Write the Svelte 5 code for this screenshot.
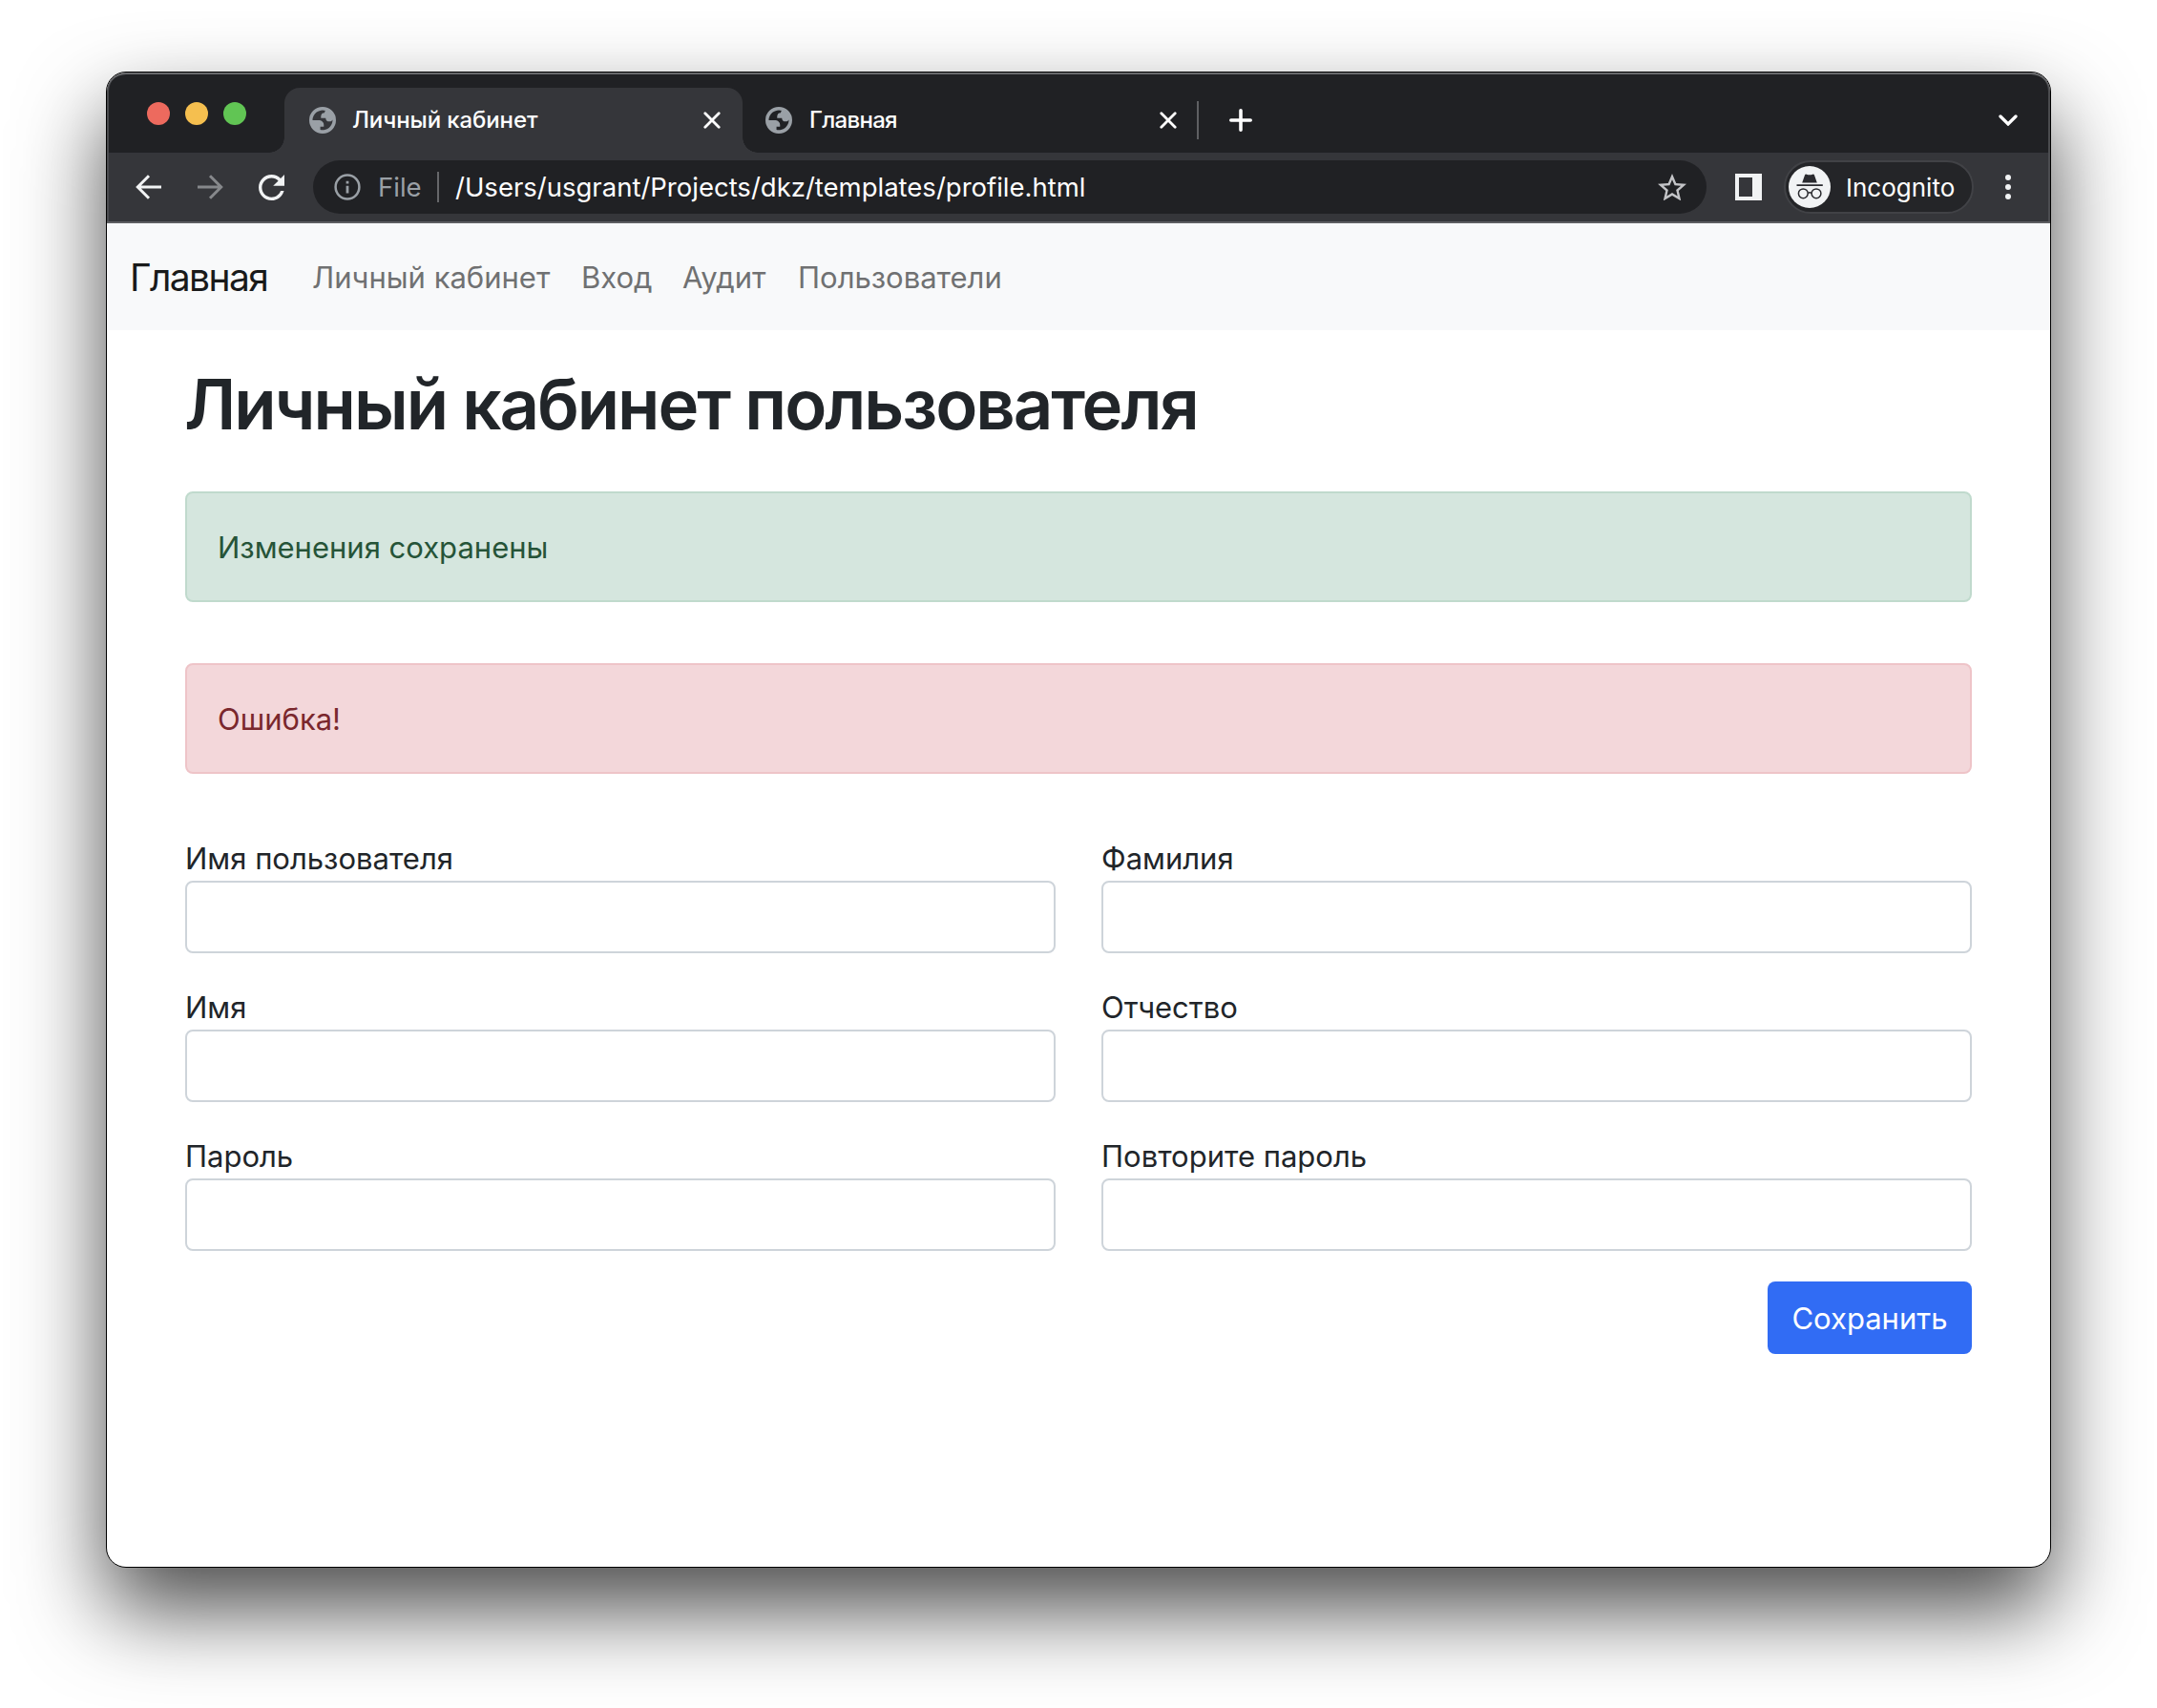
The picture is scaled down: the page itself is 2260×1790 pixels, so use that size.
<script lang="ts">
  const tabs = [
    { title: 'Личный кабинет', active: true },
    { title: 'Главная', active: false }
  ];
  const links = ['Личный кабинет', 'Вход', 'Аудит', 'Пользователи'];
  const fields = [
    { id: 'username', label: 'Имя пользователя', type: 'text' },
    { id: 'surname', label: 'Фамилия', type: 'text' },
    { id: 'name', label: 'Имя', type: 'text' },
    { id: 'patronymic', label: 'Отчество', type: 'text' },
    { id: 'password', label: 'Пароль', type: 'password' },
    { id: 'repeat', label: 'Повторите пароль', type: 'password' }
  ];
</script>

<div class="desktop">
  <div class="window">
    <div class="tabstrip">
      <div class="lights"><i class="red"></i><i class="yellow"></i><i class="green"></i></div>
      {#each tabs as tab}
        <div class="tab" class:active={tab.active}>
          <svg class="globe" viewBox="0 0 16 16" width="28" height="28">
            <path fill="#9aa0a6" fill-rule="evenodd" d="M8 0a8 8 0 1 0 0 16A8 8 0 0 0 8 0zM2 8.011h3.300c2.556.016 3.692 1.297 3.407 3.843H6.616v1.900a6 6 0 0 0 7.373-6.100C13.600 8.300 12.950 8.750 12.100 8.750 10.648 8.750 9.846 8.063 9.846 6.688H7.035C6.830 4.642 7.547 3.619 9.190 3.619c0-.731.245-1.198.608-1.350A6 6 0 0 0 2 8.011z" />
          </svg>
          <span class="tab-title">{tab.title}</span>
          <svg class="close" viewBox="0 0 18 18" width="18" height="18">
            <path d="M1.800 1.800 16.200 16.200M16.200 1.800 1.800 16.200" />
          </svg>
        </div>
      {/each}
      <span class="tab-divider"></span>
      <svg class="plus" viewBox="0 0 24 24" width="24" height="24"><path d="M12 1.800v20.400M1.800 12h20.400" /></svg>
      <svg class="chevron" viewBox="0 0 20 12" width="20" height="12"><path d="M2 2l8 8 8-8" /></svg>
    </div>

    <div class="toolbar">
      <svg class="arrow" viewBox="0 0 28 28" width="28" height="28"><path d="M27 14H2.500M14 2.300 2.300 14 14 25.700" /></svg>
      <svg class="arrow dim" viewBox="0 0 28 28" width="28" height="28"><path d="M1 14h24.500M14 2.300 25.700 14 14 25.700" /></svg>
      <svg class="reload" viewBox="4 4 16 16" width="27" height="27">
        <path fill="#f1f3f4" d="M17.650 6.350C16.200 4.900 14.210 4 12 4c-4.420 0-7.990 3.580-7.990 8s3.570 8 7.990 8c3.730 0 6.840-2.550 7.730-6h-2.080c-.820 2.330-3.040 4-5.650 4-3.310 0-6-2.690-6-6s2.690-6 6-6c1.660 0 3.140.690 4.220 1.780L13 11h7V4l-2.350 2.350z" />
      </svg>
      <div class="omnibox">
        <svg viewBox="0 0 28 28" width="28" height="28">
          <circle cx="14" cy="14" r="12.400" fill="none" stroke="#9aa0a6" stroke-width="2.500" />
          <path d="M14 12.800v7.600M14 7.800v2.800" stroke="#9aa0a6" stroke-width="2.800" />
        </svg>
        <span class="scheme">File</span>
        <span class="bar"></span>
        <span class="url">/Users/usgrant/Projects/dkz/templates/profile.html</span>
        <svg class="star" viewBox="2 2 20 19" width="30" height="28.500">
          <path fill="#c3c4c7" d="M22 9.240l-7.190-.620L12 2 9.190 8.630 2 9.240l5.460 4.730L5.820 21 12 17.270 18.180 21l-1.630-7.030L22 9.240zM12 15.400l-3.760 2.270 1-4.280-3.320-2.880 4.380-.380L12 6.100l1.710 4.040 4.380.380-3.320 2.880 1 4.280L12 15.400z" />
        </svg>
      </div>
      <svg class="panel" viewBox="0 0 28 28" width="28" height="28"><path fill="#f1f3f4" fill-rule="evenodd" d="M0 0h28v28H0zM4 4v20h14V4z" /></svg>
      <div class="incognito">
        <svg viewBox="0 0 44 44" width="44" height="44">
          <circle cx="22" cy="22" r="22" fill="#f1f3f4" />
          <path fill="#2a2b2f" d="M14.200 17.500 17 9.500q.5-1.200 1.800-.8 3.200 1.200 6.400 0 1.300-.4 1.800.8l2.800 8zM8.500 19.200h27.300v1.700H8.500z" />
          <g fill="none" stroke="#2a2b2f" stroke-width="1.500">
            <circle cx="15.300" cy="28.800" r="4.900" /><circle cx="29" cy="28.800" r="4.900" />
            <path d="M20.200 28.500q2-1.400 3.900 0" />
          </g>
        </svg>
        <span>Incognito</span>
      </div>
      <svg class="dots" viewBox="0 0 6 26" width="6" height="26"><circle cx="3" cy="3" r="3" /><circle cx="3" cy="13" r="3" /><circle cx="3" cy="23" r="3" /></svg>
    </div>

    <nav>
      <a class="brand" href="#home">Главная</a>
      {#each links as link, i}
        <a class="link l{i}" href="#nav">{link}</a>
      {/each}
    </nav>

    <main>
      <h1>Личный кабинет пользователя</h1>
      <div class="alert success">Изменения сохранены</div>
      <div class="alert danger">Ошибка!</div>
      <form>
        {#each fields as f}
          <div class="field">
            <label for={f.id}>{f.label}</label>
            <input id={f.id} type={f.type} />
          </div>
        {/each}
        <button type="button">Сохранить</button>
      </form>
    </main>
  </div>
</div>

<style>
  :global(body) { background: #fff; overflow: hidden; }
  * { box-sizing: border-box; }
  .desktop {
    width: 2260px;
    height: 1790px;
    padding: 75px 111px;
    overflow: hidden;
    font-family: Inter, 'Liberation Sans', sans-serif;
  }
  .window {
    width: 2038px;
    height: 1568px;
    border: 1px solid #000;
    border-radius: 21px;
    overflow: hidden;
    background: #fff;
    box-shadow: 0 44px 90px rgba(0, 0, 0, 0.7);
  }
  svg { display: block; flex: none; }

  .tabstrip {
    display: flex;
    align-items: center;
    height: 84px;
    padding: 16px 34px 0 42px;
    background: #202124;
    border-radius: 20px 20px 0 0;
    box-shadow: inset 0 2px 0 #68696c, inset 2px 0 0 #4a4b4e, inset -2px 0 0 #4a4b4e;
  }
  .lights { display: flex; gap: 16px; width: 144px; margin-top: -14px; }
  .lights i { width: 24px; height: 24px; border-radius: 50%; }
  .red { background: #ed6a5e; }
  .yellow { background: #f5bf4f; }
  .green { background: #61c554; }
  .tab {
    position: relative;
    display: flex;
    align-items: center;
    width: 480px;
    height: 68px;
    padding: 0 23px 0 26px;
    border-radius: 16px 16px 0 0;
    color: #fff;
  }
  .tab + .tab { width: 476px; padding: 0 21px 0 24px; }
  .tab.active { background: #35363a; }
  /* Outward curved feet of the selected tab */
  .tab.active::before,
  .tab.active::after {
    content: '';
    position: absolute;
    bottom: 0;
    width: 16px;
    height: 16px;
  }
  .tab.active::before { left: -16px; background: radial-gradient(circle at 0 0, transparent 15.500px, #35363a 16px); }
  .tab.active::after { right: -16px; background: radial-gradient(circle at 100% 0, transparent 15.500px, #35363a 16px); }
  .tab-title { flex: 1; margin-left: 18px; padding-bottom: 2px; font-size: 24px; font-weight: 500; letter-spacing: -0.7px; }
  .tab.active .tab-title { margin-left: 17px; letter-spacing: -0.1px; }
  .close path { stroke: #fff; stroke-width: 2.800; stroke-linecap: round; }
  .tab-divider { width: 2px; height: 40px; background: #5f6063; }
  .plus { margin-left: 32px; }
  .plus path { stroke: #fff; stroke-width: 3.600; stroke-linecap: round; }
  .chevron { margin-left: auto; }
  .chevron path { fill: none; stroke: #fff; stroke-width: 3.300; stroke-linecap: round; }

  .toolbar {
    display: flex;
    align-items: center;
    height: 74px;
    padding: 0 41px 2px 30px;
    background: #35363a;
    box-shadow: inset 0 -2px 0 #5d5e61, inset 2px 0 0 #4b4c50, inset -2px 0 0 #4b4c50;
  }
  .arrow path { fill: none; stroke: #f1f3f4; stroke-width: 3; }
  .arrow.dim { margin-left: 36px; }
  .arrow.dim path { stroke: #86888b; }
  .reload { margin-left: 37px; }
  .omnibox {
    display: flex;
    align-items: center;
    width: 1460px;
    height: 56px;
    margin-left: 30px;
    padding: 0 21px 0 22px;
    border-radius: 28px;
    background: #202124;
    font-size: 27.500px;
    font-weight: 430;
  }
  .scheme { width: 45px; margin-left: 18px; color: #9aa0a6; }
  .bar { width: 2px; height: 32px; margin: 0 17px 0 17px; background: #66676a; }
  .url { color: #fff; white-space: nowrap; }
  .star { margin-left: auto; }
  .panel { margin-left: 30px; }
  .incognito {
    display: flex;
    align-items: center;
    width: 199px;
    height: 56px;
    margin-left: 23px;
    padding-left: 3px;
    border: 2px solid #414246;
    border-radius: 28px;
    background: #242528;
    color: #fff;
    font-size: 26px;
  }
  .incognito span { margin-left: 16px; padding-top: 1px; }
  .dots { margin-left: auto; fill: #f1f3f4; }

  nav {
    display: flex;
    align-items: center;
    height: 112px;
    padding: 2px 0 0 24px;
    background: #f8f9fa;
  }
  nav a { white-space: nowrap; text-decoration: none; }
  .brand { width: 191px; font-size: 39px; line-height: 60px; letter-spacing: -1.600px; color: #191a1a; }
  .link { font-size: 31px; line-height: 48px; color: #707172; }
  .l0 { width: 282px; }
  .l1 { width: 106px; }
  .l2 { width: 121px; }

  main { padding: 33px 82px; color: #212529; font-size: 31px; line-height: 48px; }
  h1 {
    margin: 0 0 47px -1px;
    font-size: 72.500px;
    font-weight: 600;
    line-height: 89px;
    letter-spacing: -2.050px;
    white-space: nowrap;
  }
  .alert { height: 116px; margin-bottom: 64px; padding: 33px 32px 31px; border: 2px solid; border-radius: 8px; }
  .success { color: #265438; background: #d5e6de; border-color: #c0dacd; }
  .danger { color: #7a272d; background: #f3d7da; border-color: #eec4c8; }
  h1 + .alert { margin-top: -1px; }
  form { display: grid; grid-template-columns: 1fr 1fr; gap: 32px 48px; }
  h1 { padding-bottom: 1px; }
  label { display: block; height: 48px; padding-top: 1px; }
  input {
    display: block;
    width: 100%;
    height: 76px;
    border: 2px solid #ced4da;
    border-radius: 8px;
    background: #fff;
  }
  button {
    grid-column: 2;
    justify-self: end;
    width: 214px;
    height: 76px;
    padding: 2px 0 0;
    border: 0;
    border-radius: 8px;
    background: #316cf4;
    color: #fff;
    font: 31px/48px Inter, 'Liberation Sans', sans-serif;
  }
</style>
